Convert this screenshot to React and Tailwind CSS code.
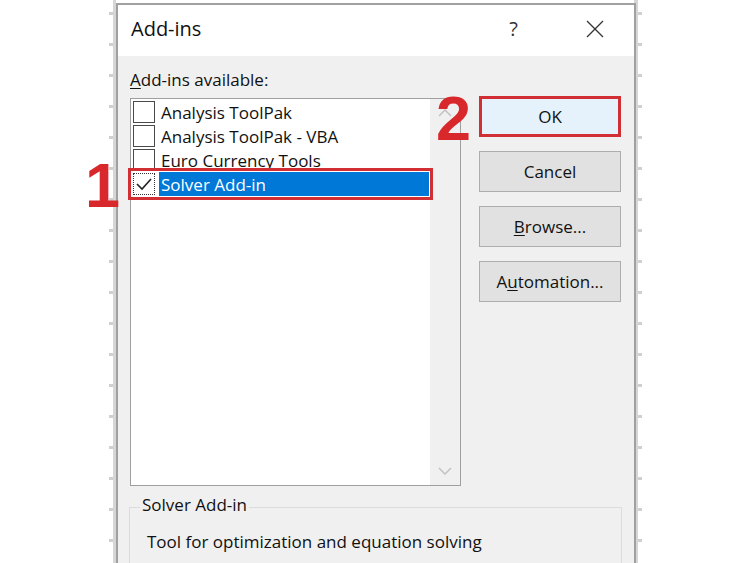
import React from "react";

const font = { fontFamily: '"Open Sans", "Noto Sans", Arial, sans-serif' };

function Ticks() {
  const ys = Array.from({ length: 18 });
  return (
    <div className="flex flex-col gap-[28px] pt-[12px]">
      {ys.map((_, i) => (
        <div key={i} className="h-[3px] w-[4px] bg-[#d0d0d0]" />
      ))}
    </div>
  );
}

function CheckBox({ checked, focus }) {
  return (
    <div
      className={
        "w-[22px] h-[22px] shrink-0 flex items-center justify-center bg-white " +
        (focus ? "border border-dotted border-[#333]" : "border border-[#4a4a4a]")
      }
    >
      {checked && (
        <svg width="18" height="18" viewBox="0 0 18 18">
          <polyline points="2,9 7,14 16,4" fill="none" stroke="#222" strokeWidth="1.6" />
        </svg>
      )}
    </div>
  );
}

function Row({ label, checked, selected }) {
  return (
    <div className="flex items-center h-[24px] pl-[2px]">
      <CheckBox checked={checked} focus={selected} />
      <div
        className={
          "ml-[4px] h-[24px] flex items-center pl-[2px] text-[17px] leading-none " +
          (selected ? "bg-[#0078d7] text-white w-[270px]" : "text-[#111]")
        }
      >
        {label}
      </div>
    </div>
  );
}

function Btn({ children, primary }) {
  return (
    <div
      className={
        "h-[41px] w-[142px] flex items-center justify-center text-[17px] text-[#111] " +
        (primary
          ? "bg-[#e5f1fb] border-[3px] border-[#d12f33]"
          : "bg-[#e1e1e1] border border-[#adadad]")
      }
    >
      {children}
    </div>
  );
}

export default function App() {
  return (
    <div className="w-[750px] h-[563px] bg-white overflow-hidden flex" style={font}>
      <div className="w-[113px] shrink-0 flex justify-end">
        <Ticks />
      </div>
      <div className="w-[3px] h-full bg-[#d6d6d6]" />
      <div className="pt-[3px] h-full">
        <div className="w-[520px] h-[600px] border-2 border-[#a0a0a0] flex flex-col relative">
          {/* title bar */}
          <div className="h-[51px] bg-white flex items-center pl-[13px] pr-[30px] shrink-0">
            <div className="text-[20px] text-[#111] flex-1 pb-[3px]">Add-ins</div>
            <div className="text-[20px] text-[#333] pb-[3px] mr-[68px]">?</div>
            <svg width="18" height="18" viewBox="0 0 18 18" className="mb-[4px]">
              <line x1="1" y1="1" x2="17" y2="17" stroke="#333" strokeWidth="1.3" />
              <line x1="17" y1="1" x2="1" y2="17" stroke="#333" strokeWidth="1.3" />
            </svg>
          </div>
          {/* body */}
          <div className="flex-1 bg-[#f0f0f0] pl-[12px] pr-[13px] pt-[13px]">
            <div className="text-[17px] text-[#111] leading-[22px] h-[29px]">
              <span className="underline underline-offset-2">A</span>dd-ins available:
            </div>
            <div className="flex">
              <div className="w-[332px] h-[388px] border border-[#9f9f9f] bg-white flex relative">
                <div className="flex-1 pt-[1px]">
                  <Row label="Analysis ToolPak" />
                  <Row label="Analysis ToolPak - VBA" />
                  <Row label="Euro Currency Tools" />
                  <Row label="Solver Add-in" checked selected />
                </div>
                <div className="w-[30px] bg-[#f0f0f0] flex flex-col items-center justify-between py-[10px]">
                  <svg width="14" height="8" viewBox="0 0 14 8">
                    <polyline points="1,7 7,1 13,7" fill="none" stroke="#c2c2c2" strokeWidth="1.5" />
                  </svg>
                  <svg width="14" height="8" viewBox="0 0 14 8">
                    <polyline points="1,1 7,7 13,1" fill="none" stroke="#c2c2c2" strokeWidth="1.5" />
                  </svg>
                </div>
                {/* red highlight frame around selected row */}
                <div className="absolute left-[-3px] top-[69px] w-[305px] h-[32px] border-[3px] border-[#d12f33]" />
                {/* number 2 overlay */}
                <div
                  className="absolute left-[305px] top-[-12px] text-[#d8282c] text-[63px] font-black leading-none"
                  style={{ fontFamily: '"Liberation Sans", Arial, sans-serif' }}
                >
                  2
                </div>
                {/* number 1 overlay */}
                <div
                  className="absolute left-[-46px] top-[55px] text-[#d8282c] text-[63px] font-black leading-none"
                  style={{ fontFamily: '"Liberation Sans", Arial, sans-serif' }}
                >
                  1
                </div>
              </div>
              <div className="ml-[18px] flex flex-col gap-[14px] -mt-[2px]">
                <Btn primary>OK</Btn>
                <Btn>Cancel</Btn>
                <Btn>
                  <span>
                    <span className="underline underline-offset-2">B</span>rowse...
                  </span>
                </Btn>
                <Btn>
                  <span>
                    A<span className="underline underline-offset-2">u</span>tomation...
                  </span>
                </Btn>
              </div>
            </div>
            {/* group box */}
            <div className="mt-[21px] ml-[-1px] w-[493px] h-[80px] border border-[#dcdcdc] relative pt-[23px] pl-[17px]">
              <div className="absolute left-[10px] top-[-14px] bg-[#f0f0f0] px-[2px] text-[17px] text-[#111] leading-[22px]">
                Solver Add-in
              </div>
              <div className="text-[17px] text-[#111] leading-[22px]">
                Tool for optimization and equation solving
              </div>
            </div>
          </div>
        </div>
      </div>
      <div className="w-[4px] h-full bg-[#d6d6d6] ml-[-2px]" />
      <div className="flex-1 flex">
        <Ticks />
      </div>
    </div>
  );
}
